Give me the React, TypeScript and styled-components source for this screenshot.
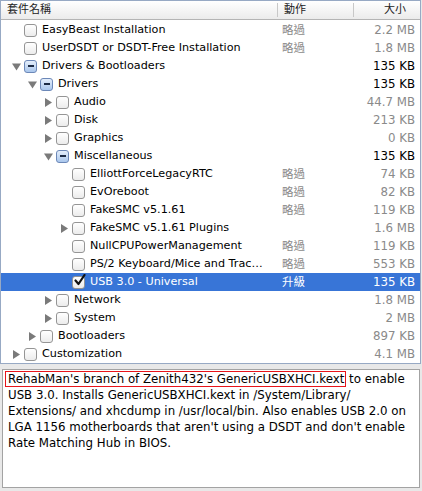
import React from 'react';
import styled, { createGlobalStyle } from 'styled-components';

const GlobalStyle = createGlobalStyle`
  html, body {
    margin: 0;
    padding: 0;
    background: #e8e8e8;
  }
  body {
    font-family: "DejaVu Sans", "Noto Sans CJK TC", sans-serif;
    font-size: 11px;
    color: #000;
  }
`;

const Window = styled.div`
  width: 422px;
  height: 491px;
  display: flex;
  flex-direction: column;
  gap: 5px;
  box-sizing: border-box;
`;

const Outline = styled.div`
  width: 421px;
  border: 1px solid #97a9c4;
  background: #fff;
  box-sizing: border-box;
`;

const cols = '276px 76px 1fr';

const HeaderRow = styled.div`
  display: grid;
  grid-template-columns: ${cols};
  height: 18px;
  border-bottom: 1px solid #b4b4b4;
  background: linear-gradient(#ffffff, #ebebeb);
  font-size: 11px;
  line-height: 18px;
`;

const HeadCell = styled.div<{ $align?: string; $divider?: boolean }>`
  padding: 0 ${(p) => (p.$align === 'right' ? '14px' : '6px')} 0 6px;
  text-align: ${(p) => p.$align || 'left'};
  border-left: ${(p) => (p.$divider ? '1px solid #c8c8c8' : 'none')};
  margin: ${(p) => (p.$divider ? '2px 0' : '0')};
  line-height: ${(p) => (p.$divider ? '14px' : '18px')};
  color: #222;
`;

const Body = styled.div`
  padding-top: 1px;
`;

const RowWrap = styled.div<{ $selected?: boolean }>`
  display: grid;
  grid-template-columns: ${cols};
  height: 18px;
  line-height: 18px;
  font-size: 11.2px;
  background: ${(p) => (p.$selected ? '#3875d7' : 'transparent')};
  color: ${(p) => (p.$selected ? '#fff' : '#000')};
`;

const NameCell = styled.div<{ $level: number }>`
  display: flex;
  align-items: center;
  padding-left: ${(p) => 11 + p.$level * 16}px;
  white-space: nowrap;
  overflow: hidden;
  min-width: 0;
`;

const Disclosure = styled.span`
  width: 12px;
  flex: none;
  display: flex;
  align-items: center;
`;

const Box = styled.span<{ $state: 'off' | 'on' | 'mixed' }>`
  width: 11px;
  height: 11px;
  flex: none;
  border-radius: 3px;
  border: 1px solid ${(p) => (p.$state === 'mixed' ? '#6c88b8' : '#959595')};
  background: ${(p) =>
    p.$state === 'mixed'
      ? 'linear-gradient(#e4eefb, #a9c6ec)'
      : 'linear-gradient(#ffffff, #ececec)'};
  position: relative;
  display: flex;
  align-items: center;
  justify-content: center;
  margin-right: 5px;
`;

const Dash = styled.span`
  width: 6px;
  height: 2px;
  background: #1b2a44;
`;

const Label = styled.span``;

const ActionCell = styled.div<{ $selected?: boolean }>`
  padding-left: 5px;
  color: ${(p) => (p.$selected ? '#fff' : '#8a8a8a')};
  font-size: 11.5px;
`;

const SizeCell = styled.div<{ $dark?: boolean; $selected?: boolean }>`
  text-align: right;
  padding-right: 5px;
  font-size: 11.8px;
  color: ${(p) => (p.$selected ? '#fff' : p.$dark ? '#000' : '#8a8a8a')};
`;

const Desc = styled.div`
  margin: 0 2px 0 2px;
  height: 119px;
  border: 1px solid #a3a3a3;
  background: #fff;
  padding: 1px 5px;
  box-sizing: border-box;
  line-height: 16px;
  font-size: 11.8px;
  white-space: nowrap;
`;

const Highlight = styled.span`
  outline: 1px solid #e8141a;
  padding: 0 1px 0 2px;
  margin-left: -2px;
`;

type Node = {
  name: string;
  level: number;
  expand?: 'open' | 'closed';
  state?: 'off' | 'on' | 'mixed';
  action?: string;
  size: string;
  dark?: boolean;
  selected?: boolean;
};

const rows: Node[] = [
  { name: 'EasyBeast Installation', level: 0, action: '略過', size: '2.2 MB' },
  { name: 'UserDSDT or DSDT-Free Installation', level: 0, action: '略過', size: '1.8 MB' },
  { name: 'Drivers & Bootloaders', level: 0, expand: 'open', state: 'mixed', size: '135 KB', dark: true },
  { name: 'Drivers', level: 1, expand: 'open', state: 'mixed', size: '135 KB', dark: true },
  { name: 'Audio', level: 2, expand: 'closed', size: '44.7 MB' },
  { name: 'Disk', level: 2, expand: 'closed', size: '213 KB' },
  { name: 'Graphics', level: 2, expand: 'closed', size: '0 KB' },
  { name: 'Miscellaneous', level: 2, expand: 'open', state: 'mixed', size: '135 KB', dark: true },
  { name: 'ElliottForceLegacyRTC', level: 3, action: '略過', size: '74 KB' },
  { name: 'EvOreboot', level: 3, action: '略過', size: '82 KB' },
  { name: 'FakeSMC v5.1.61', level: 3, action: '略過', size: '119 KB' },
  { name: 'FakeSMC v5.1.61 Plugins', level: 3, expand: 'closed', size: '1.6 MB' },
  { name: 'NullCPUPowerManagement', level: 3, action: '略過', size: '119 KB' },
  { name: 'PS/2 Keyboard/Mice and Trac…', level: 3, action: '略過', size: '553 KB' },
  { name: 'USB 3.0 - Universal', level: 3, state: 'on', action: '升級', size: '135 KB', selected: true },
  { name: 'Network', level: 2, expand: 'closed', size: '1.8 MB' },
  { name: 'System', level: 2, expand: 'closed', size: '2 MB' },
  { name: 'Bootloaders', level: 1, expand: 'closed', size: '897 KB' },
  { name: 'Customization', level: 0, expand: 'closed', size: '4.1 MB' },
];

const Triangle = ({ dir }: { dir: 'open' | 'closed' }) => (
  <svg width="9" height="9" viewBox="0 0 9 9">
    {dir === 'open' ? (
      <polygon points="0,1.5 9,1.5 4.5,8.5" fill="#7a7a7a" />
    ) : (
      <polygon points="1,0 8,4.5 1,9" fill="#7a7a7a" />
    )}
  </svg>
);

const Check = () => (
  <svg width="12" height="12" viewBox="0 0 12 12" style={{ position: 'absolute', left: 1, top: -3 }}>
    <path d="M1.5 6.5 L4.5 10 L10.5 1" stroke="#111" strokeWidth="2.2" fill="none" strokeLinecap="round" strokeLinejoin="round" />
  </svg>
);

const Row = ({ n }: { n: Node }) => {
  const state = n.state || 'off';
  return (
    <RowWrap $selected={n.selected}>
      <NameCell $level={n.level}>
        <Disclosure>{n.expand && <Triangle dir={n.expand} />}</Disclosure>
        <Box $state={state}>
          {state === 'mixed' && <Dash />}
          {state === 'on' && <Check />}
        </Box>
        <Label>{n.name}</Label>
      </NameCell>
      <ActionCell $selected={n.selected}>{n.action}</ActionCell>
      <SizeCell $dark={n.dark} $selected={n.selected}>
        {n.size}
      </SizeCell>
    </RowWrap>
  );
};

const App = () => {
  return (
    <Window>
      <GlobalStyle />
      <Outline>
        <HeaderRow>
          <HeadCell>套件名稱</HeadCell>
          <HeadCell $divider>動作</HeadCell>
          <HeadCell $divider $align="right">大小</HeadCell>
        </HeaderRow>
        <Body>
          {rows.map((n) => (
            <Row key={n.name} n={n} />
          ))}
        </Body>
      </Outline>
      <Desc>
        <Highlight>RehabMan's branch of Zenith432's GenericUSBXHCI.kext</Highlight> to enable
        <br />
        USB 3.0. Installs GenericUSBXHCI.kext in /System/Library/
        <br />
        Extensions/ and xhcdump in /usr/local/bin. Also enables USB 2.0 on
        <br />
        LGA 1156 motherboards that aren't using a DSDT and don't enable
        <br />
        Rate Matching Hub in BIOS.
      </Desc>
    </Window>
  );
};

export default App;
